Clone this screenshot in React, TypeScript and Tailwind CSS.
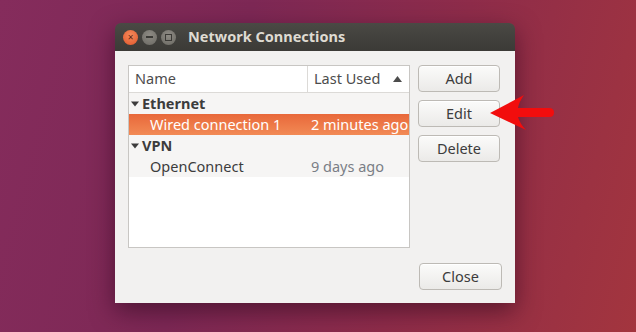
import React from "react";

const font = { fontFamily: '"Noto Sans", "Open Sans", sans-serif' };

const Btn = ({ label, className = "" }: { label: string; className?: string }) => (
  <button
    className={`h-[27px] w-[82px] rounded-[4px] border border-[#bdbab5] bg-[linear-gradient(#fbfbfa,#ebeae8)] text-[14.5px] text-[#3c3c3c] shadow-[inset_0_1px_0_#ffffff] ${className}`}
  >
    {label}
  </button>
);

const Caret = () => (
  <svg width="8" height="6" viewBox="0 0 8 6" className="shrink-0">
    <path d="M0 0.5 L8 0.5 L4 5.5 Z" fill="#3c3c3c" />
  </svg>
);

export default function App() {
  return (
    <div
      className="relative h-[332px] w-[636px] overflow-hidden bg-[linear-gradient(105deg,#852c5c_0%,#7d2855_35%,#8e2c4a_65%,#a3353e_100%)] pl-[115px] pt-[23px]"
      style={font}
    >
      {/* window */}
      <div className="flex w-[400px] flex-col overflow-hidden rounded-t-[6px] shadow-[0_8px_24px_rgba(40,5,25,0.55)]">
        <div className="flex h-[28px] items-center bg-[linear-gradient(#4a4944,#3b3a36)] pl-[8px]">
          <div className="flex items-center gap-[4px]">
            <span className="flex h-[15px] w-[15px] items-center justify-center rounded-full bg-[radial-gradient(circle_at_50%_35%,#f58a5c,#e0562a)] text-[10px] leading-none text-[#5a2412]">
              ×
            </span>
            <span className="flex h-[15px] w-[15px] items-center justify-center rounded-full bg-[radial-gradient(circle_at_50%_35%,#8e8b84,#6b6963)]">
              <span className="h-[1.5px] w-[7px] bg-[#3b3a36]" />
            </span>
            <span className="flex h-[15px] w-[15px] items-center justify-center rounded-full bg-[radial-gradient(circle_at_50%_35%,#8e8b84,#6b6963)]">
              <span className="h-[7px] w-[7px] border border-[#3b3a36]" />
            </span>
          </div>
          <span className="ml-[12px] text-[14.5px] font-bold text-[#dfdbd2]">Network Connections</span>
        </div>

        <div className="flex flex-col bg-[#f2f1f0] px-[13px] pb-[13px] pt-[14px]">
          <div className="flex gap-[8px]">
            {/* tree */}
            <div className="flex h-[183px] w-[282px] flex-col border border-[#c8c6c3] bg-white text-[14.5px]">
              <div className="flex h-[27px] border-b border-[#dcdad7] text-[#4c4c4c]">
                <div className="flex w-[179px] items-center border-r border-[#dcdad7] pl-[6px]">Name</div>
                <div className="flex flex-1 items-center pl-[6px]">
                  <span>Last Used</span>
                  <svg width="9" height="6" viewBox="0 0 9 6" className="ml-[13px]">
                    <path d="M0 6 L9 6 L4.5 0 Z" fill="#4c4c4c" />
                  </svg>
                </div>
              </div>
              <div className="flex flex-col bg-[#f6f5f4]">
                <div className="flex h-[21px] items-center gap-[3px] pl-[2px] font-bold text-[#3c3c3c]">
                  <Caret />
                  Ethernet
                </div>
                <div className="flex h-[21px] items-center bg-[linear-gradient(#e8683a,#f28a55)] text-white">
                  <span className="w-[160px] pl-[21px]">Wired connection 1</span>
                  <span className="pl-[22px]">2 minutes ago</span>
                </div>
                <div className="flex h-[21px] items-center gap-[3px] pl-[2px] font-bold text-[#3c3c3c]">
                  <Caret />
                  VPN
                </div>
                <div className="flex h-[21px] items-center text-[#3c3c3c]">
                  <span className="w-[160px] pl-[21px]">OpenConnect</span>
                  <span className="pl-[22px] text-[#7a7e86]">9 days ago</span>
                </div>
              </div>
            </div>

            {/* side buttons */}
            <div className="flex flex-col gap-[8px]">
              <Btn label="Add" />
              <Btn label="Edit" />
              <Btn label="Delete" />
            </div>
          </div>

          <div className="mt-[15px] flex justify-end">
            <Btn label="Close" className="w-[83px]" />
          </div>
        </div>
      </div>

      {/* annotation arrow */}
      <svg className="absolute left-[488px] top-[94px]" width="68" height="38" viewBox="0 0 68 38">
        <path
          d="M2 19 L36 1 Q31 8 30 14 L61 14 Q66 14 66 18.5 Q66 23 61 23 L30 23 Q32 30 38 36 Z"
          fill="#f20d0d"
        />
      </svg>
    </div>
  );
}
